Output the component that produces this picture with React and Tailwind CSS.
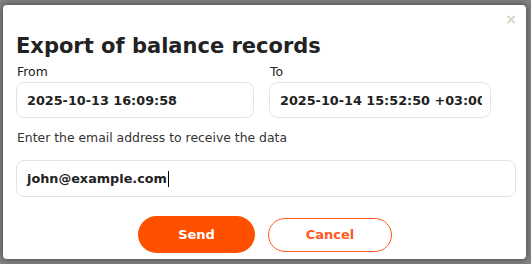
import { useState } from "react";

export default function App() {
  const [from, setFrom] = useState("2025-10-13 16:09:58");
  const [to, setTo] = useState("2025-10-14 15:52:50 +03:00");
  const email = "john@example.com";

  return (
    <div
      className="w-[531px] h-[264px] bg-[#858585] pt-[5px] pl-[3px]"
      style={{ fontFamily: '"DejaVu Sans", Verdana, sans-serif' }}
    >
      <div className="relative w-[523px] h-[254px] bg-white rounded-[4px] shadow-[0_0_8px_rgba(0,0,0,0.55)] px-[13px] pt-[27px]">
        <button className="absolute top-[7px] right-[9px] text-[14px] leading-none font-bold text-[#d9d2c2]">
          ×
        </button>

        <h2 className="text-[21px] leading-[28px] font-bold text-[#222]">
          Export of balance records
        </h2>

        <div className="flex gap-[15px] mt-[4px]">
          <div className="w-[238px]">
            <label className="block text-[12.4px] leading-[16px] text-[#222] pl-[1px]">
              From
            </label>
            <input
              value={from}
              onChange={(e) => setFrom(e.target.value)}
              className="mt-[2px] w-full h-[36px] rounded-[8px] border border-[#e3e3e3] px-[10px] text-[12.8px] font-bold text-[#222] outline-none"
            />
          </div>
          <div className="w-[222px]">
            <label className="block text-[12.4px] leading-[16px] text-[#222] pl-[1px]">
              To
            </label>
            <input
              value={to}
              onChange={(e) => setTo(e.target.value)}
              className="mt-[2px] w-full h-[36px] rounded-[8px] border border-[#e3e3e3] pl-[10px] pr-[8px] text-[12.8px] font-bold text-[#222] outline-none"
            />
          </div>
        </div>

        <p className="mt-[12px] text-[12.4px] leading-[16px] text-[#333] pl-[1px]">
          Enter the email address to receive the data
        </p>
        <div className="mt-[14px] w-[500px] h-[37px] rounded-[8px] border border-[#e3e3e3] px-[10px] flex items-center text-[12.8px] font-bold text-[#222]">
          <span>{email}</span>
          <span className="w-[1px] h-[16px] bg-black ml-[1px]"></span>
        </div>

        <div className="flex justify-center items-center gap-[13px] mt-[19px] pl-[1px]">
          <button className="w-[117px] h-[37px] rounded-full bg-[#ff5000] text-white text-[13px] font-bold">
            Send
          </button>
          <button className="w-[124px] h-[34px] rounded-full border border-[#ff5a1f] bg-white text-[#ff5a1f] text-[13px] font-bold">
            Cancel
          </button>
        </div>
      </div>
    </div>
  );
}
